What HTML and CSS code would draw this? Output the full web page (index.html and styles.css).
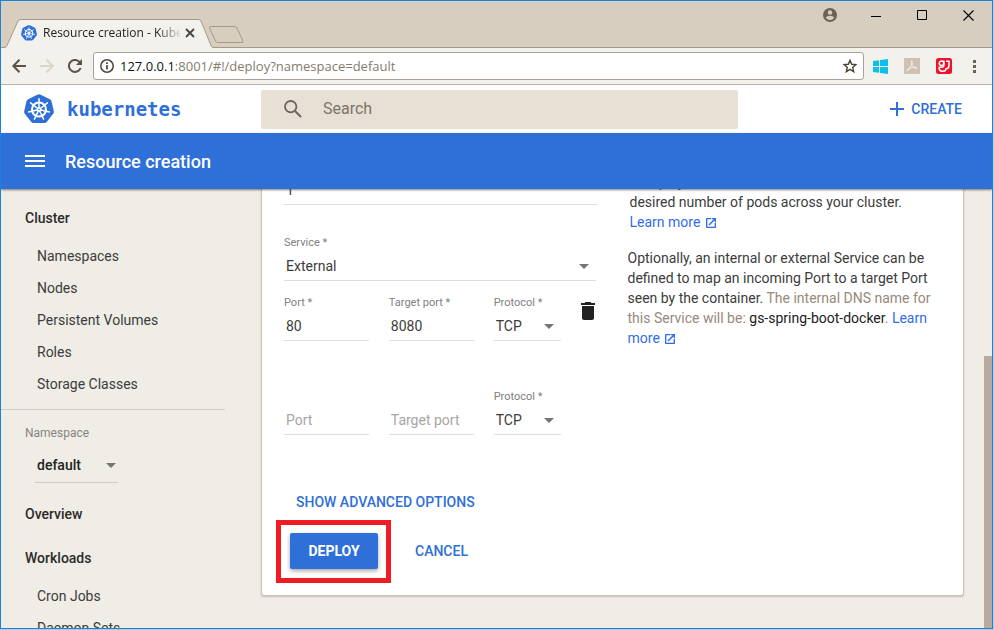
FILE: index.html
```html
<!DOCTYPE html>
<html lang="en">
<head>
<meta charset="utf-8">
<title>Resource creation - Kubernetes Dashboard</title>
<link rel="stylesheet" href="styles.css">
</head>
<body>
<svg width="0" height="0" class="defs" aria-hidden="true">
  <symbol id="k8s" viewBox="0 0 30 30">
    <path fill="#2f6fd8" d="M15 .3c.6 0 1 .2 1.600.4l9.300 4.500c.9.500 1.500 1.200 1.700 2.200l2.200 9.900c.2.900 0 1.700-.6 2.400l-6.300 8c-.7.900-1.500 1.300-2.600 1.300H9.700c-1.100 0-2-.4-2.600-1.300l-6.300-8c-.6-.7-.8-1.500-.6-2.400l2.200-9.900c.2-1 .8-1.700 1.700-2.200l9.300-4.500c.600-.2 1-.4 1.600-.4z"/>
    <g fill="none" stroke="#fff" stroke-linecap="round">
      <circle cx="15" cy="15.500" r="7" stroke-width="2"/>
      <path stroke-width="1.500" d="M15 15.500V4.800M15 15.500l8.400-6.700M15 15.500l10.400 2.400M15 15.500l4.600 9.600M15 15.500l-4.600 9.600M15 15.500L4.600 17.900M15 15.500L6.600 8.800"/>
    </g>
    <circle cx="15" cy="15.500" r="2.200" fill="#fff"/><circle cx="15" cy="15.500" r=".8" fill="#2f6fd8"/>
  </symbol>
  <symbol id="arrow" viewBox="0 0 10 5"><path fill="#757575" d="M0 0h10L5 5z"/></symbol>
  <symbol id="open" viewBox="0 0 18 18"><path fill="#326de6" stroke="#326de6" stroke-width=".8" d="M16 16H2V2h7V0H2a2 2 0 0 0-2 2v14a2 2 0 0 0 2 2h14a2 2 0 0 0 2-2V9h-2zM11 0v2h3.600L4.800 11.800l1.400 1.400L16 3.400V7h2V0z"/></symbol>
</svg>
<div class="window">
  <div class="titlebar">
    <svg class="tab-shapes" width="250" height="30" viewBox="0 0 250 30" aria-hidden="true">
      <path d="M0 28.500H6L18 2Q19 .5 21 .5H198Q200 .5 201 2L212 28.500H250V30H0z" fill="#f2f1ec"/>
      <path d="M0 28.500H4Q6 28.500 7 26.500L18 2Q19 .5 21 .5H198Q200 .5 201 2L211 26.500Q212 28.500 214 28.500H250" fill="none" stroke="#a89888"/>
      <path d="M211 7.500H234Q236 7.500 237 9L243 22Q243.500 23.500 242 23.500H218Q216 23.500 215.500 22L209.500 9Q209 7.500 211 7.500z" fill="#d8cec0" stroke="#a89888"/>
    </svg>
    <div class="tab">
      <svg width="16" height="16" aria-hidden="true"><use href="#k8s"/></svg>
      <span class="tab-title">Resource creation - Kubernetes</span>
      <button class="icon-btn" aria-label="Close tab"><svg width="10" height="10" viewBox="0 0 10 10"><path d="M1 1l8 8M9 1L1 9" stroke="#444" stroke-width="1.800"/></svg></button>
    </div>
    <div class="win-buttons">
      <button class="icon-btn" aria-label="User"><svg width="14" height="14" viewBox="0 0 14 14"><circle cx="7" cy="7" r="7" fill="#6b6254"/><circle cx="7" cy="4.500" r="2.200" fill="#d8cec0"/><path d="M2.700 9.500Q4 7.700 7 7.700T11.300 9.500Q9.800 12 7 12T2.700 9.500z" fill="#d8cec0"/></svg></button>
      <button class="icon-btn" aria-label="Minimize"><svg width="10" height="11" viewBox="0 0 10 11"><path d="M0 6.500h10" stroke="#000"/></svg></button>
      <button class="icon-btn" aria-label="Maximize"><svg width="10" height="10" viewBox="0 0 10 10"><path d="M.5.500h9v9h-9z" fill="none" stroke="#000"/></svg></button>
      <button class="icon-btn" aria-label="Close"><svg width="11" height="11" viewBox="0 0 11 11"><path d="M.5.500l10 10M10.500.500l-10 10" stroke="#000" stroke-width="1.100"/></svg></button>
    </div>
  </div>
  <div class="toolbar">
    <button class="icon-btn" aria-label="Back"><svg width="14" height="14" viewBox="0 0 14 14"><path d="M14 7H1.500M7.500.700L1.300 7l6.200 6.300" fill="none" stroke="#5b5346" stroke-width="2"/></svg></button>
    <button class="icon-btn" aria-label="Forward"><svg width="14" height="14" viewBox="0 0 14 14"><path d="M0 7h12.500M6.500.700L12.700 7l-6.200 6.300" fill="none" stroke="#dcd4c8" stroke-width="2"/></svg></button>
    <button class="icon-btn" aria-label="Reload"><svg width="14" height="14" viewBox="0 0 14 14"><path d="M12.600 9A6 6 0 1 1 11.200 2.700L12 3.600" fill="none" stroke="#5b5346" stroke-width="2"/><path d="M14 0v6H8z" fill="#5b5346"/></svg></button>
    <div class="omnibox">
      <svg width="14" height="14" viewBox="0 0 14 14" aria-hidden="true"><circle cx="7" cy="7" r="6.200" fill="none" stroke="#4b453b" stroke-width="1.500"/><path d="M7 6v4.500M7 3.300v1.600" stroke="#4b453b" stroke-width="1.700"/></svg>
      <span class="url">127.0.0.1<span class="url-rest">:8001/#!/deploy?namespace=default</span></span>
      <button class="icon-btn" aria-label="Bookmark"><svg width="14" height="14" viewBox="0 0 14 14"><path d="M7 1.300l1.700 4 4.200.3-3.200 2.800 1 4.300L7 10.400l-3.700 2.300 1-4.300L1.100 5.600l4.200-.3z" fill="none" stroke="#4b4336" stroke-width="1.400"/></svg></button>
    </div>
    <div class="extensions">
      <button class="icon-btn" aria-label="Windows"><svg width="15" height="15" viewBox="0 0 15 15"><path d="M0 2l6-.8V7H0zM7 1l8-1v7H7zM0 8h6v5.800L0 13zM7 8h8v7l-8-1z" fill="#0cc0ea"/></svg></button>
      <button class="icon-btn" aria-label="Acrobat"><svg width="16" height="16" viewBox="0 0 16 16"><path d="M0 0h16v16H0z" fill="#cec2b4"/><path d="M7.200 3q1.300-.6 1 1.500Q7.600 8 4 12.500q-1 .8-1-.3 1.500-2.300 5.500-2.800t4.500.6q0 1.200-2 .3Q8 8.500 7.200 3z" fill="none" stroke="#f4efe8"/></svg></button>
      <button class="icon-btn" aria-label="Extension"><svg width="16" height="16" viewBox="0 0 16 16"><rect width="16" height="16" rx="2.500" fill="#f0122d"/><g fill="none" stroke="#fff" stroke-width="1.500"><circle cx="5.500" cy="5.300" r="2.300"/><path d="M7.900 2.500V7Q7.900 9.300 5.500 9.300H3.200V11Q4 13.500 7 13.300T9.800 11Q13 10.500 13 7.500V3.300H10"/></g></svg></button>
      <button class="icon-btn" aria-label="Menu"><svg width="3" height="13" viewBox="0 0 3 13"><path d="M0 0h3v3H0zM0 5h3v3H0zM0 10h3v3H0z" fill="#6b6254"/></svg></button>
    </div>
  </div>

  <header class="app-header">
    <a class="brand" href="#"><svg width="30" height="30" aria-hidden="true"><use href="#k8s"/></svg><span>kubernetes</span></a>
    <div class="search">
      <svg width="18" height="18" viewBox="0 0 18 18" aria-hidden="true"><circle cx="6.700" cy="6.700" r="5.700" fill="none" stroke="#6a655d" stroke-width="1.800"/><path d="M11 11l6 6" stroke="#6a655d" stroke-width="2"/></svg>
      <input type="text" placeholder="Search" aria-label="Search">
    </div>
    <button class="link-btn create"><svg width="14" height="14" viewBox="0 0 14 14" aria-hidden="true"><path d="M7 0v14M0 7h14" stroke="#2f6fd8" stroke-width="2"/></svg>CREATE</button>
  </header>
  <div class="actionbar">
    <button class="icon-btn" aria-label="Toggle menu"><svg width="20" height="12" viewBox="0 0 20 12"><path d="M0 1h20M0 6h20M0 11h20" stroke="#fff" stroke-width="2"/></svg></button>
    <h1>Resource creation</h1>
  </div>

  <div class="body">
    <nav class="sidebar">
      <a class="group" href="#">Cluster</a>
      <a href="#">Namespaces</a>
      <a href="#">Nodes</a>
      <a href="#">Persistent Volumes</a>
      <a href="#">Roles</a>
      <a href="#">Storage Classes</a>
      <div class="namespace">
        <label for="ns">Namespace</label>
        <div class="select"><select id="ns"><option>default</option></select><svg width="10" height="5" aria-hidden="true"><use href="#arrow"/></svg></div>
      </div>
      <a class="group" href="#">Overview</a>
      <a class="group" href="#">Workloads</a>
      <a href="#">Cron Jobs</a>
      <a href="#">Daemon Sets</a>
    </nav>

    <main class="content">
      <form class="card">
        <div class="row pods">
          <div class="field"><label for="pods">Number of pods *</label><input id="pods" type="text" value="1"></div>
          <p class="help">A Deployment will be created to maintain the desired number of pods across your cluster. <a href="#">Learn&nbsp;more <svg width="10" height="10" aria-hidden="true"><use href="#open"/></svg></a></p>
        </div>
        <div class="row service">
          <div>
            <div class="field"><label for="svc">Service *</label><div class="select"><select id="svc"><option>External</option></select><svg width="10" height="5" aria-hidden="true"><use href="#arrow"/></svg></div></div>
            <div class="ports">
              <div class="field"><label for="p1">Port *</label><input id="p1" type="text" value="80"></div>
              <div class="field"><label for="t1">Target port *</label><input id="t1" type="text" value="8080"></div>
              <div class="field"><label for="pr1">Protocol *</label><div class="select"><select id="pr1"><option>TCP</option></select><svg width="10" height="5" aria-hidden="true"><use href="#arrow"/></svg></div></div>
              <button type="button" class="icon-btn trash" aria-label="Delete"><svg width="14" height="18" viewBox="0 0 14 18"><path fill="#212121" d="M1 16a2 2 0 0 0 2 2h8a2 2 0 0 0 2-2V4H1zM14 1h-3.500l-1-1h-5l-1 1H0v2h14z"/></svg></button>
            </div>
            <div class="ports spare">
              <div class="field"><input type="text" placeholder="Port" aria-label="Port"></div>
              <div class="field"><input type="text" placeholder="Target port" aria-label="Target port"></div>
              <div class="field"><label for="pr2">Protocol *</label><div class="select"><select id="pr2"><option>TCP</option></select><svg width="10" height="5" aria-hidden="true"><use href="#arrow"/></svg></div></div>
            </div>
          </div>
          <p class="help">Optionally, an internal or external Service can be defined to map an incoming Port to a target Port seen by the container. <span class="muted">The internal DNS name for this Service will be: <b>gs-spring-boot-docker</b>.</span> <a href="#">Learn more <svg width="10" height="10" aria-hidden="true"><use href="#open"/></svg></a></p>
        </div>
        <button type="button" class="link-btn advanced">SHOW ADVANCED OPTIONS</button>
        <div class="actions">
          <span class="deploy-wrap"><button type="button" class="deploy">DEPLOY</button></span>
          <button type="button" class="link-btn">CANCEL</button>
        </div>
      </form>
    </main>
    <div class="scrollbar"><div class="thumb"></div></div>
  </div>
</div>
</body>
</html>
```
FILE: styles.css
```css
* { box-sizing: border-box; }

body {
  margin: 0;
  padding: 0 1px 1px 0;
  height: 100vh;
  overflow: hidden;
  background: #b5c9d8;
  font: 14px/20px Roboto, sans-serif;
  color: #3c3c3c;
}

.defs { position: absolute; }
a { color: inherit; text-decoration: none; }
button, input, select { font: inherit; color: inherit; border: 0; background: none; padding: 0; margin: 0; }
input, select { width: 100%; min-width: 0; appearance: none; outline: 0; border-radius: 0; }
svg { display: block; flex: none; }
.icon-btn { display: flex; align-items: center; justify-content: center; }

.window {
  display: flex;
  flex-direction: column;
  height: 100%;
  border: 1px solid #1883d7;
  background: #f0ede6;
  overflow: hidden;
}

/* Browser frame */
.titlebar {
  position: relative;
  flex: none;
  display: flex;
  justify-content: space-between;
  height: 47px;
  background: #d8cec0;
  border-bottom: 1px solid #a89888;
}
.tab-shapes { position: absolute; left: -1px; bottom: -2px; }
.tab {
  position: relative;
  display: flex;
  align-items: center;
  align-self: flex-end;
  width: 194px;
  height: 28px;
  padding-left: 20px;
  font: 12px/16px "Open Sans", sans-serif;
  color: #222;
}
.tab-title {
  width: 138px;
  margin: 0 5px 0 6px;
  overflow: hidden;
  white-space: nowrap;
  mask-image: linear-gradient(90deg, #000 114px, transparent 140px);
}
.win-buttons { display: flex; gap: 36px; height: 28px; padding-right: 18px; }
.win-buttons .icon-btn:first-child { margin-right: -2px; }

.toolbar {
  flex: none;
  display: flex;
  align-items: center;
  gap: 14px;
  height: 37px;
  padding: 0 16px 0 11px;
  background: #f2f1ec;
  border-bottom: 1px solid #bfb1a1;
}
.omnibox {
  flex: 1;
  display: flex;
  align-items: center;
  gap: 6px;
  height: 28px;
  margin-left: -3px;
  padding: 0 6px;
  background: #fff;
  border: 1px solid #aaa29a;
  border-radius: 3px;
}
.url { flex: 1; font: 13px/20px "Open Sans", sans-serif; color: #111; }
.url-rest { color: #857b6d; }
.extensions { display: flex; gap: 16px; margin-left: -5px; }
.extensions .icon-btn:last-child { margin-left: 5px; }

/* Application header */
.app-header {
  flex: none;
  display: flex;
  align-items: center;
  height: 48px;
  padding-right: 30px;
  background: #fff;
}
.brand {
  display: flex;
  align-items: center;
  gap: 13px;
  width: 260px;
  padding-left: 23px;
  font: bold 19px/24px "DejaVu Sans Mono", monospace;
  color: #2f6fd8;
}
.search {
  display: flex;
  align-items: center;
  gap: 21px;
  flex: 0 1 477px;
  height: 39px;
  padding: 0 23px;
  background: #e8e0d5;
  border-radius: 2px;
  font-size: 16px;
}
.search input::placeholder { color: #7b7469; opacity: 1; }
.link-btn { display: flex; align-items: center; height: 36px; padding-bottom: 1px; font-weight: 500; color: #2f6fd8; }
.create { gap: 7px; margin-left: auto; }

.actionbar {
  position: relative;
  z-index: 1;
  flex: none;
  display: flex;
  align-items: center;
  gap: 20px;
  height: 56px;
  padding-left: 24px;
  background: #2f6fd8;
  box-shadow: 0 1px 2px rgba(60, 40, 20, .6);
}
.actionbar h1 { margin: 0; padding-top: 2px; font: 500 18px/24px Roboto, sans-serif; color: #fff; }

/* Page body */
.body { flex: 1; display: flex; min-height: 0; overflow: hidden; }
.sidebar { flex: none; width: 260px; padding: 7px 36px 0 0; }
.sidebar a { display: block; padding-left: 36px; line-height: 32px; }
.sidebar .group { padding-left: 24px; font-weight: 500; line-height: 44px; color: #2b2b2b; }
.namespace {
  margin: 9px 0;
  padding: 15px 0 0 24px;
  border-top: 1px solid #cfccc6;
  font-size: 12px;
  line-height: 16px;
  color: #868480;
}
.namespace label { display: block; }
.namespace .select {
  width: 83px;
  height: 35px;
  margin: 7px 0 0 10px;
  border-color: #cfccc6;
  font-size: 14px;
  font-weight: 500;
  color: #222;
}
.namespace .select svg { margin-right: 2px; }

.content { flex: 1; min-width: 0; padding-right: 21px; }
.card {
  margin: -40px 0 0 1px;
  padding: 9px 20px 26px 22px;
  background: #fff;
  border-radius: 2px;
  box-shadow: 0 1px 2px 1px #cbbfb0, 0 0 0 1px #ddd0c2;
}
.row { display: grid; grid-template-columns: 1fr 1fr; gap: 32px; }
.pods { min-height: 76px; }
.service { padding-right: 4px; }
.help { margin: 0; padding-top: 14px; }
.help a { color: #326de6; }
.help a svg { display: inline-block; margin-left: 2px; vertical-align: -1px; }
.muted { color: #98897a; }
.muted b { font-weight: 400; color: #212121; }

.field { display: flex; flex-direction: column; justify-content: flex-end; height: 47px; }
.field label { margin-bottom: 1px; font-size: 11px; line-height: 16px; color: #808080; }
.field input, .select { height: 29px; padding-left: 2px; border-bottom: 1px solid #dedede; }
.field input::placeholder { color: #a6a6a6; opacity: 1; }
.select { display: grid; align-items: center; }
.select select, .select svg { grid-area: 1 / 1; }
.select svg { justify-self: end; margin-right: 7px; pointer-events: none; }

.ports { display: grid; grid-template-columns: 5fr 5fr 4fr 14px; gap: 20px; margin-top: 13px; }
.spare { margin-top: 47px; }
.trash { align-self: start; margin-top: 8px; }

.advanced { margin: 49px 0 13px 12px; }
.actions { display: flex; align-items: center; gap: 25px; }
.deploy-wrap { margin: -13px -1px -14px -8px; padding: 8px 8px 9px 9px; border: 5px solid #ee1c25; }
.deploy {
  display: block;
  width: 88px;
  height: 36px;
  padding-bottom: 1px;
  border-radius: 2px;
  background: #2f6fd8;
  color: #fff;
  font-weight: 700;
  box-shadow: 0 2px 4px rgba(0, 0, 0, .35);
}

.scrollbar { flex: none; width: 8px; display: flex; flex-direction: column; justify-content: flex-end; }
.thumb { height: 62%; background: #b8aa9e; }
```
